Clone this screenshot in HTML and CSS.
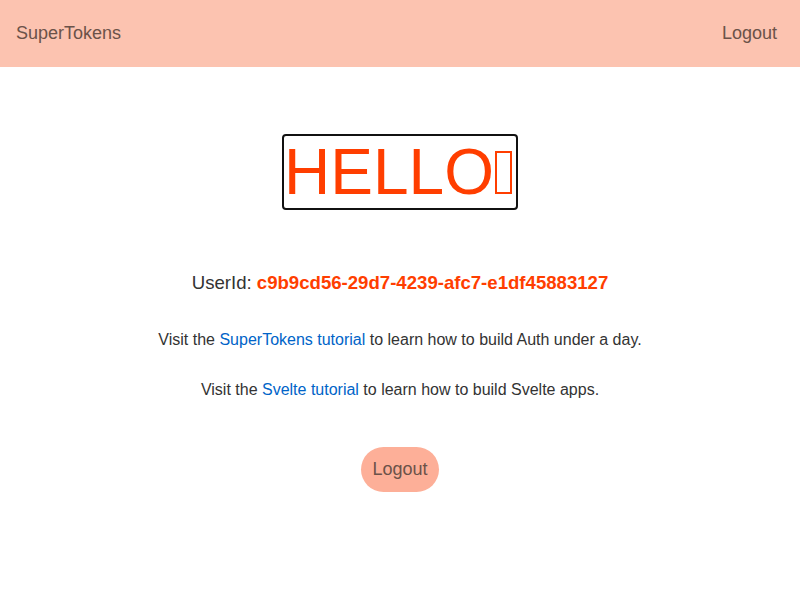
FILE: index.html
```html
<!DOCTYPE html>
<html>
<head>
<meta charset="utf-8">
<link rel="stylesheet" href="styles.css">
</head>
<body>
<header class="topbar">
  <div class="brand">SuperTokens</div>
  <button class="nav-logout">Logout</button>
</header>
<main class="main">
  <h1 class="hello">HELLO<span class="wave" role="img" aria-label="👋"></span></h1>
  <div class="userid">UserId: <span class="uid">c9b9cd56-29d7-4239-afc7-e1df45883127</span></div>
  <p class="line first">Visit the <a href="#">SuperTokens tutorial</a> to learn how to build Auth under a day.</p>
  <p class="line second">Visit the <a href="#">Svelte tutorial</a> to learn how to build Svelte apps.</p>
  <button class="logout">Logout</button>
</main>
</body>
</html>
```
FILE: styles.css
```css
html, body {
  margin: 0;
  padding: 0;
  background: #ffffff;
  font-family: "Liberation Sans", Arial, sans-serif;
  color: #333333;
}
.topbar {
  height: 67px;
  background: #fcc3b0;
  display: flex;
  align-items: center;
  justify-content: space-between;
  padding: 0 23px 0 16px;
}
.brand {
  font-size: 18px;
  color: #6b5249;
}
.nav-logout {
  font-family: inherit;
  font-size: 18px;
  color: #6b5249;
  background: none;
  border: none;
  padding: 0;
  cursor: pointer;
}
.main {
  display: flex;
  flex-direction: column;
  align-items: center;
  padding-top: 67px;
}
.hello {
  margin: 0;
  font-size: 64px;
  font-weight: normal;
  color: #ff3e00;
  border: 2px solid #111111;
  border-radius: 4px;
  line-height: 72px;
  padding: 0;
}
.wave {
  display: inline-block;
  box-sizing: border-box;
  width: 17px;
  height: 43px;
  margin: 0 4px 0 1px;
  border: 2px solid #ff3e00;
  vertical-align: baseline;
}
.userid {
  margin-top: 62px;
  font-size: 18.6px;
  line-height: 22px;
}
.uid {
  color: #ff3e00;
  font-weight: bold;
}
.line {
  margin: 0;
  font-size: 16px;
  line-height: 18px;
}
.line.first {
  margin-top: 37px;
}
.line.second {
  margin-top: 32px;
}
.line a {
  color: #0064c8;
  text-decoration: none;
}
.logout {
  margin-top: 48px;
  font-family: inherit;
  font-size: 18px;
  color: #6b5249;
  background: #fdaf98;
  border: none;
  border-radius: 23px;
  width: 78px;
  height: 45px;
  padding: 0;
  cursor: pointer;
}
```
